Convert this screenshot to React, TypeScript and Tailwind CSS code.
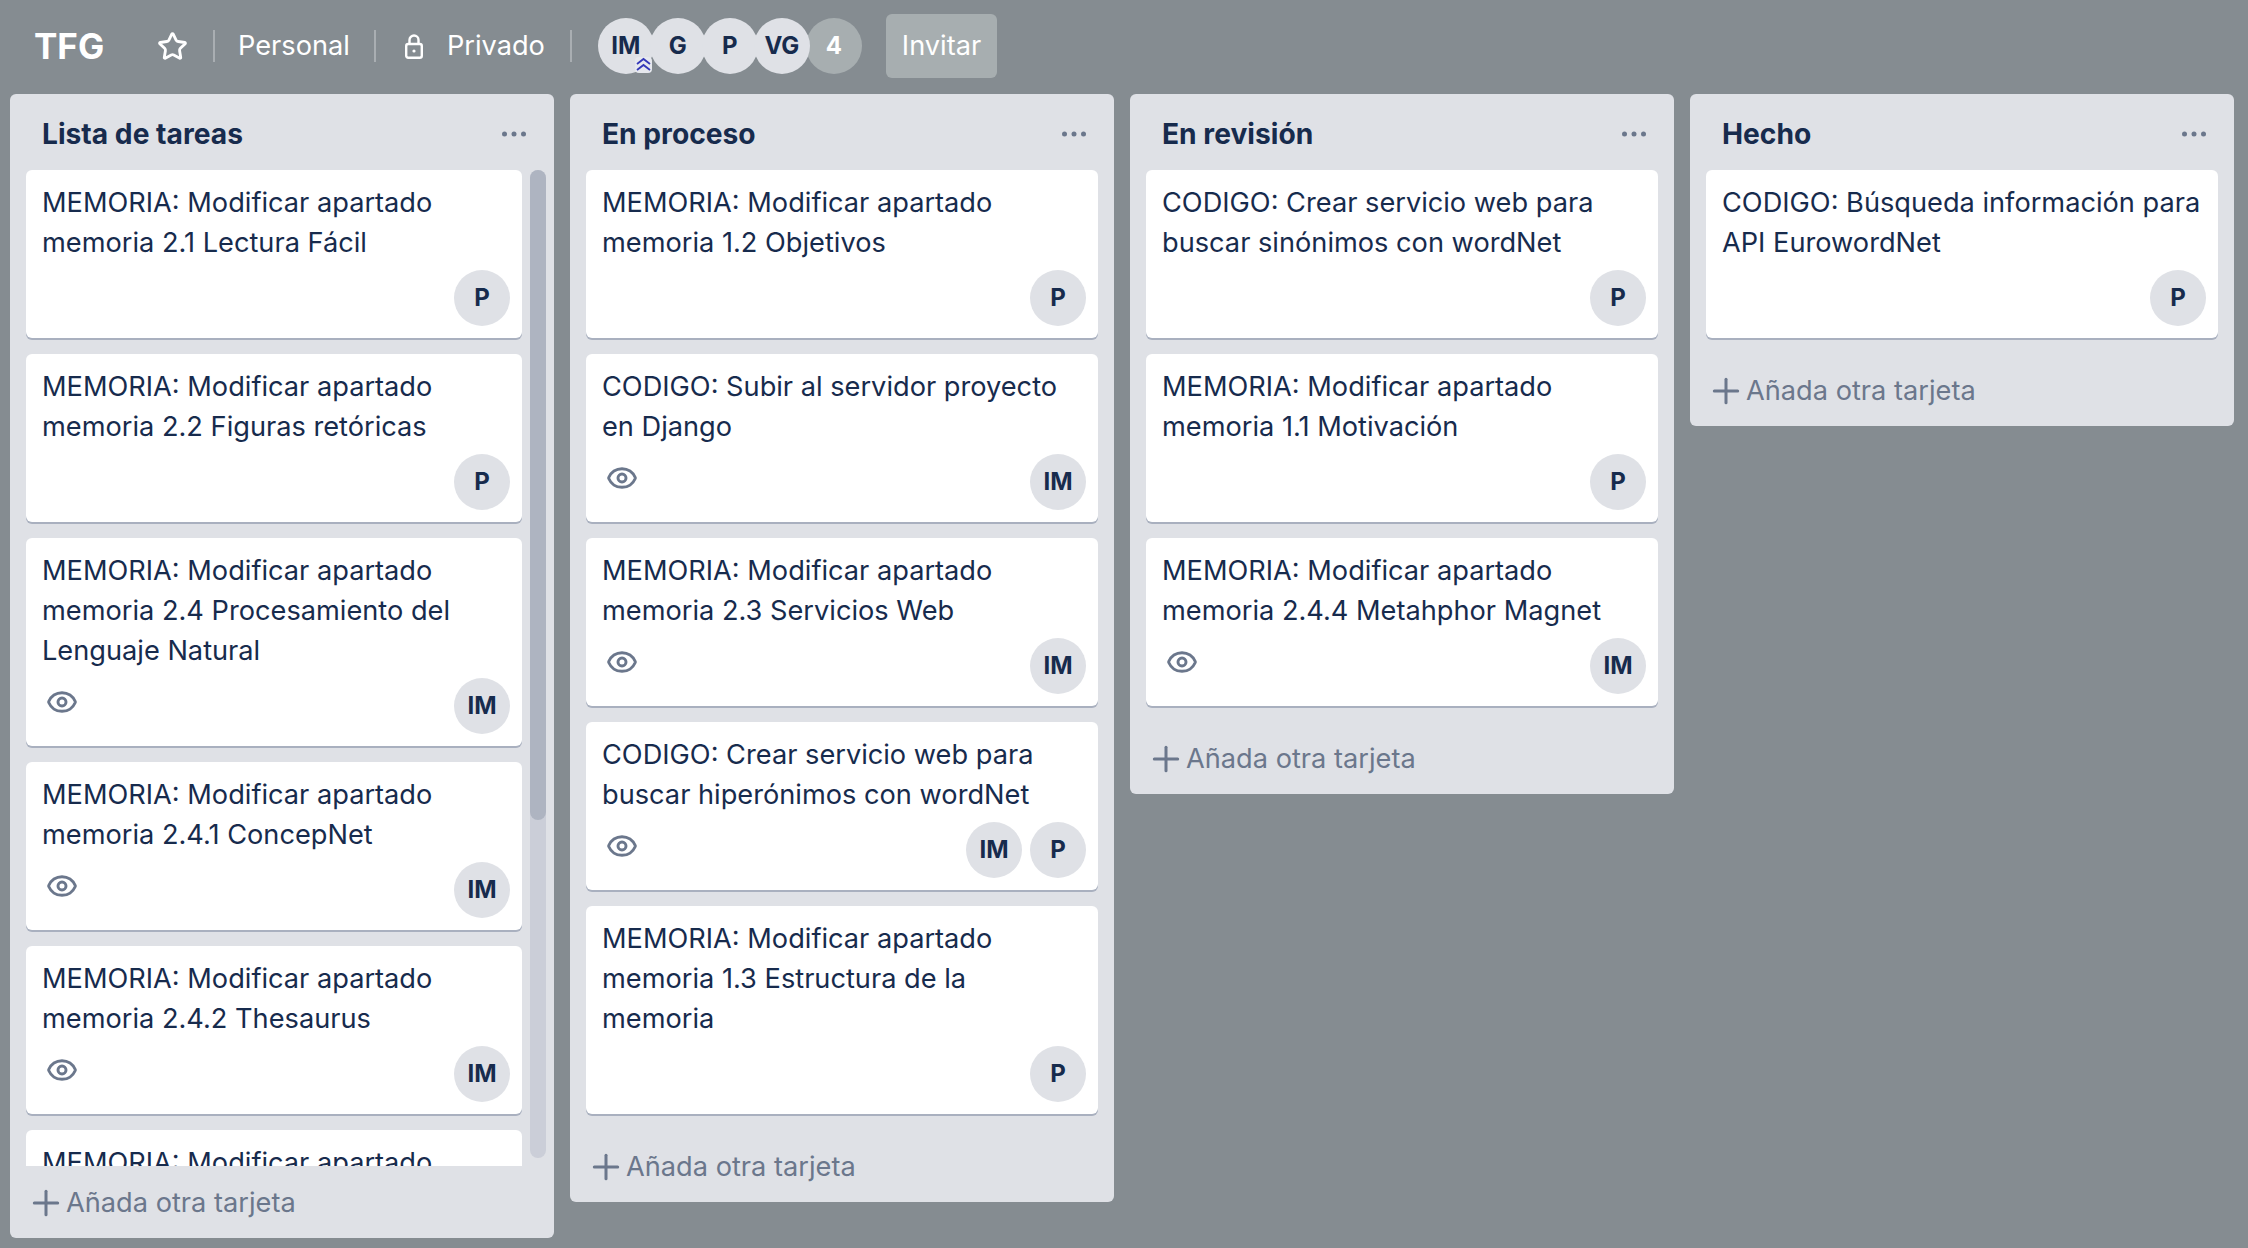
import { Eye, Plus, Star } from 'lucide-react';

// ============================================================
// Kanban board: TFG
// ============================================================

interface CardData {
  title: string;
  watching?: boolean;
  members: string[];
}

interface ListData {
  title: string;
  cards: CardData[];
  scrolling?: boolean;
}

const lists: ListData[] = [
  {
    title: 'Lista de tareas',
    scrolling: true,
    cards: [
      { title: 'MEMORIA: Modificar apartado memoria 2.1 Lectura Fácil', members: ['P'] },
      { title: 'MEMORIA: Modificar apartado memoria 2.2 Figuras retóricas', members: ['P'] },
      { title: 'MEMORIA: Modificar apartado memoria 2.4 Procesamiento del Lenguaje Natural', watching: true, members: ['IM'] },
      { title: 'MEMORIA: Modificar apartado memoria 2.4.1 ConcepNet', watching: true, members: ['IM'] },
      { title: 'MEMORIA: Modificar apartado memoria 2.4.2 Thesaurus', watching: true, members: ['IM'] },
      // cut off by the scroll area, only its first line shows
      { title: 'MEMORIA: Modificar apartado', members: [] },
    ],
  },
  {
    title: 'En proceso',
    cards: [
      { title: 'MEMORIA: Modificar apartado memoria 1.2 Objetivos', members: ['P'] },
      { title: 'CODIGO: Subir al servidor proyecto en Django', watching: true, members: ['IM'] },
      { title: 'MEMORIA: Modificar apartado memoria 2.3 Servicios Web', watching: true, members: ['IM'] },
      { title: 'CODIGO: Crear servicio web para buscar hiperónimos con wordNet', watching: true, members: ['IM', 'P'] },
      { title: 'MEMORIA: Modificar apartado memoria 1.3 Estructura de la memoria', members: ['P'] },
    ],
  },
  {
    title: 'En revisión',
    cards: [
      { title: 'CODIGO: Crear servicio web para buscar sinónimos con wordNet', members: ['P'] },
      { title: 'MEMORIA: Modificar apartado memoria 1.1 Motivación', members: ['P'] },
      { title: 'MEMORIA: Modificar apartado memoria 2.4.4 Metahphor Magnet', watching: true, members: ['IM'] },
    ],
  },
  {
    title: 'Hecho',
    cards: [
      { title: 'CODIGO: Búsqueda información para API EurowordNet', members: ['P'] },
    ],
  },
];

function BoardCard({ card }: { card: CardData }) {
  return (
    <div className="w-full shrink-0 rounded-[6px] bg-white shadow-[0_2px_0_#a9b0bf] px-4 pt-[13px]">
      <p className="text-[27.2px] leading-[40px] text-[#172b4d]">{card.title}</p>
      <div className="flex items-start justify-between mt-[7px] h-[68px]">
        <div className="pt-2 pl-1">
          {card.watching && <Eye className="w-[32px] h-[32px] text-[#6b778c]" strokeWidth={2.2} />}
        </div>
        <div className="flex gap-2 -mr-1">
          {card.members.map((member) => (
            <span key={member} className="flex items-center justify-center w-[56px] h-[56px] rounded-full bg-[#dfe1e6] text-[24px] font-bold text-[#172b4d]">
              {member}
            </span>
          ))}
        </div>
      </div>
    </div>
  );
}

function BoardList({ list }: { list: ListData }) {
  return (
    <section className={`flex flex-col w-[544px] shrink-0 rounded-[6px] bg-[#dfe1e6] ${list.scrolling ? 'h-[1144px]' : ''}`}>
      <header className="flex items-center justify-between h-[76px] pt-[4px] pl-[32px] pr-[24px] shrink-0">
        <h2 className="text-[28.2px] font-bold text-[#172b4d]">{list.title}</h2>
        <svg viewBox="0 0 24 6" className="w-[24px] h-[6px] mr-[4px] text-[#6b778c]" fill="currentColor">
          <circle cx="2.5" cy="3" r="2.5" />
          <circle cx="12" cy="3" r="2.5" />
          <circle cx="21.5" cy="3" r="2.5" />
        </svg>
      </header>
      <div className={`flex min-h-0 flex-1 pl-4 ${list.scrolling ? 'pr-2 gap-2' : 'pr-4'}`}>
        <div className="flex flex-col gap-4 flex-1 min-w-0 overflow-hidden">
          {list.cards.map((card) => (
            <BoardCard key={card.title} card={card} />
          ))}
          {!list.scrolling && <div className="h-0" />}
        </div>
        {list.scrolling && (
          <div className="w-4 h-[988px] shrink-0 rounded-lg bg-[#cbced8]">
            <div className="h-[650px] rounded-lg bg-[#aeb4c1]" />
          </div>
        )}
      </div>
      <button className="flex items-center h-[72px] shrink-0 pt-[2px] pl-4 text-[27.2px] text-[#6b778c]">
        <Plus className="w-[40px] h-[40px]" strokeWidth={1.8} />
        <span>Añada otra tarjeta</span>
      </button>
    </section>
  );
}

function Avatar({ label }: { label: string }) {
  return (
    <span className="relative flex items-center justify-center w-[56px] h-[56px] -ml-1 first:ml-0 rounded-full bg-[#dfe1e6] text-[24px] font-bold text-[#172b4d]">
      {label}
      {label === 'IM' && (
        <svg viewBox="0 0 17 16" className="absolute bottom-[1px] right-[2px] w-[17px] h-[16px] bg-[#e6e8ee] rounded-sm text-[#3438b8]" fill="none" stroke="currentColor" strokeWidth={1.8}>
          <path d="M2 7l6.5-5 6.5 5M2 13l6.5-5 6.5 5" />
        </svg>
      )}
    </span>
  );
}

export default function App() {
  return (
    <div className="min-h-[1248px] bg-[#858c91] font-['Inter',sans-serif] overflow-hidden">
      <nav className="flex items-center h-[94px] pb-[2px] pl-[34px] text-white text-[27.2px]">
        <h1 className="text-[35px] font-bold w-[123px]">TFG</h1>
        <Star className="w-[31px] h-[31px] shrink-0" strokeWidth={2.2} />
        <span className="w-[2px] h-[32px] ml-[25px] mr-[23px] bg-white/30" />
        <span>Personal</span>
        <span className="w-[2px] h-[32px] mx-[24px] bg-white/30" />
        <svg viewBox="0 0 18 25" className="w-[18px] h-[25px] ml-[5px] mr-[24px]" fill="none" stroke="currentColor" strokeWidth={2.4}>
          <path d="M4.5 10V6a4.5 4.5 0 0 1 9 0v4" />
          <rect x="1.2" y="10" width="15.6" height="13.8" rx="2" />
          <circle cx="9" cy="17" r="1.6" fill="currentColor" stroke="none" />
        </svg>
        <span>Privado</span>
        <span className="w-[2px] h-[32px] ml-[25px] mr-[26px] bg-white/30" />
        <div className="flex items-center">
          {['IM', 'G', 'P', 'VG'].map((label) => (
            <Avatar key={label} label={label} />
          ))}
          <span className="flex items-center justify-center w-[56px] h-[56px] -ml-1 rounded-full bg-[#a7aeb0] text-[24px] font-bold text-white">4</span>
        </div>
        <button className="ml-[24px] h-[64px] px-4 rounded-[6px] bg-[#a7aeb0] text-white text-[27.2px]">Invitar</button>
      </nav>
      <main className="flex items-start gap-4 pl-[10px]">
        {lists.map((list) => (
          <BoardList key={list.title} list={list} />
        ))}
      </main>
    </div>
  );
}
